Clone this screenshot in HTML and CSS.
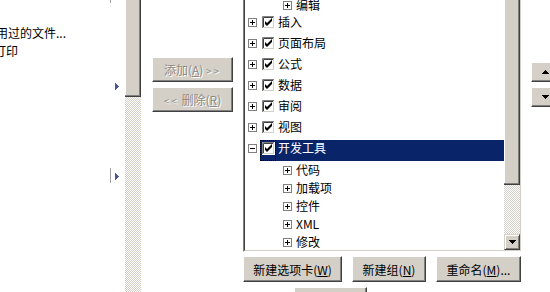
FILE: index.html
```html
<!DOCTYPE html>
<html lang="zh-CN">
<head>
  <meta charset="UTF-8">
  <title>自定义功能区</title>
  <link rel="stylesheet" href="styles.css">
</head>
<body>

  <svg class="defs" width="0" height="0">
    <symbol id="plus" viewBox="0 0 9 9">
      <rect x="0.5" y="0.5" width="8" height="8" fill="#fff" stroke="#808080"/>
      <path d="M2 4.5h5M4.5 2v5" stroke="#000"/>
    </symbol>
    <symbol id="minus" viewBox="0 0 9 9">
      <rect x="0.5" y="0.5" width="8" height="8" fill="#fff" stroke="#808080"/>
      <path d="M2 4.5h5" stroke="#000"/>
    </symbol>
    <symbol id="check" viewBox="0 0 13 13">
      <rect width="13" height="13" fill="#fff"/>
      <path d="M0.5 12.5V0.5H12.5" fill="none" stroke="#808080"/>
      <path d="M1.5 11.5V1.5H11.5" fill="none" stroke="#404040"/>
      <path d="M0 12.5h13M12.5 0v13" stroke="#fff"/>
      <path d="M1 11.5h11M11.5 1v11" stroke="#d4d0c8"/>
      <path d="M3 5l2 2 5-5v3l-5 5-2-2z" fill="#000"/>
    </symbol>
    <symbol id="arrow-down" viewBox="0 0 7 4">
      <path d="M0 0h7v1h-1v1h-1v1h-1v1h-1v-1h-1v-1h-1v-1h-1z" fill="#000"/>
    </symbol>
    <symbol id="arrow-up" viewBox="0 0 7 4">
      <path d="M0 4h7v-1h-1v-1h-1v-1h-1v-1h-1v1h-1v1h-1v1h-1z" fill="#000"/>
    </symbol>
  </svg>

  <div class="dialog">

    <!-- 命令列表 -->
    <div class="cmd-pane">
      <ul class="cmd-list">
        <li class="cmd-row"><span></span><i class="split"></i></li>
        <li class="cmd-row"></li>
        <li class="cmd-row"><span class="cmd-label cut-a">用过的文件...</span></li>
        <li class="cmd-row"><span class="cmd-label cut-b">打印</span></li>
        <li class="cmd-row"></li>
        <li class="cmd-row"><span></span><span></span><i class="more"><svg width="4" height="7" viewBox="0 0 4 7"><path d="M0 0v7h1v-1h1v-1h1v-1h1v-1h-1v-1h-1v-1h-1v-1z" fill="#4b5796"/></svg></i></li>
        <li class="cmd-row"></li>
        <li class="cmd-row"></li>
        <li class="cmd-row"></li>
        <li class="cmd-row"></li>
        <li class="cmd-row"><span></span><i class="split"></i><i class="more"><svg width="4" height="7" viewBox="0 0 4 7"><path d="M0 0v7h1v-1h1v-1h1v-1h1v-1h-1v-1h-1v-1h-1v-1z" fill="#4b5796"/></svg></i></li>
      </ul>
    </div>
    <div class="vscroll">
      <div class="thumb cmd-thumb"></div>
      <div class="track"></div>
    </div>

    <!-- 添加 / 删除 -->
    <div class="move-col">
      <button class="btn btn-move" disabled>添加(<u>A</u>) <span class="arrows">&gt;&gt;</span></button>
      <button class="btn btn-move" disabled><span class="arrows">&lt;&lt;</span> 删除(<u>R</u>)</button>
    </div>

    <!-- 主选项卡 -->
    <div class="tree-col">
      <div class="tree-box">
        <div class="tree-inner">
          <ul class="tree">
            <li class="node sub"><svg class="exp"><use href="#plus"/></svg><span class="node-label">编辑</span></li>
            <li class="node top"><svg class="exp"><use href="#plus"/></svg><span class="chk-wrap"><svg class="chk"><use href="#check"/></svg></span><span class="node-label">插入</span></li>
            <li class="node top"><svg class="exp"><use href="#plus"/></svg><span class="chk-wrap"><svg class="chk"><use href="#check"/></svg></span><span class="node-label">页面布局</span></li>
            <li class="node top"><svg class="exp"><use href="#plus"/></svg><span class="chk-wrap"><svg class="chk"><use href="#check"/></svg></span><span class="node-label">公式</span></li>
            <li class="node top"><svg class="exp"><use href="#plus"/></svg><span class="chk-wrap"><svg class="chk"><use href="#check"/></svg></span><span class="node-label">数据</span></li>
            <li class="node top"><svg class="exp"><use href="#plus"/></svg><span class="chk-wrap"><svg class="chk"><use href="#check"/></svg></span><span class="node-label">审阅</span></li>
            <li class="node top"><svg class="exp"><use href="#plus"/></svg><span class="chk-wrap"><svg class="chk"><use href="#check"/></svg></span><span class="node-label">视图</span></li>
            <li class="node top selected"><svg class="exp"><use href="#minus"/></svg><span class="chk-wrap"><svg class="chk"><use href="#check"/></svg></span><span class="node-label">开发工具</span></li>
            <li class="node sub"><svg class="exp"><use href="#plus"/></svg><span class="node-label">代码</span></li>
            <li class="node sub"><svg class="exp"><use href="#plus"/></svg><span class="node-label">加载项</span></li>
            <li class="node sub"><svg class="exp"><use href="#plus"/></svg><span class="node-label">控件</span></li>
            <li class="node sub"><svg class="exp"><use href="#plus"/></svg><span class="node-label">XML</span></li>
            <li class="node sub"><svg class="exp"><use href="#plus"/></svg><span class="node-label">修改</span></li>
          </ul>
          <div class="vscroll">
            <div class="thumb tree-thumb"></div>
            <div class="track"></div>
            <div class="sb-btn"><svg width="7" height="4"><use href="#arrow-down"/></svg></div>
          </div>
        </div>
      </div>

      <div class="tab-actions">
        <button class="btn btn-newtab">新建选项卡(<u>W</u>)</button>
        <button class="btn btn-newgroup">新建组(<u>N</u>)</button>
        <button class="btn btn-rename">重命名(<u>M</u>)...</button>
      </div>
      <div class="reset-row">
        <button class="btn btn-reset">重置(<u>E</u>) ▾</button>
      </div>
    </div>

    <!-- 上移 / 下移 -->
    <div class="order-col">
      <button class="btn btn-order"><svg width="7" height="4"><use href="#arrow-up"/></svg></button>
      <button class="btn btn-order"><svg width="7" height="4"><use href="#arrow-down"/></svg></button>
    </div>

  </div>

</body>
</html>
```

FILE: styles.css
```css
* {
  box-sizing: border-box;
}

body {
  margin: 0;
  width: 550px;
  height: 292px;
  overflow: hidden;
  background: #fff;
  color: #000;
  font-family: "Noto Sans CJK SC", "Liberation Sans", sans-serif;
  font-size: 12px;
}

.defs {
  display: block;
  width: 0;
  height: 0;
}

.dialog {
  display: flex;
  height: 292px;
}

/* left command list */
.cmd-pane {
  width: 125px;
  flex: none;
  overflow: hidden;
}

.cmd-list {
  list-style: none;
  margin: -12px 0 0;
  padding: 0;
}

.cmd-row {
  height: 18px;
  display: grid;
  grid-template-columns: 110px 5px 10px;
}

.cmd-label {
  line-height: 18px;
  white-space: nowrap;
  overflow: hidden;
}

.cut-a {
  text-indent: -4px;
}

.cut-b {
  text-indent: -6px;
}

.split {
  width: 1px;
  height: 15px;
  background: #a0a0a0;
}

.more {
  display: flex;
  padding-top: 5px;
}

/* scrollbars */
.vscroll {
  width: 16px;
  flex: none;
  display: flex;
  flex-direction: column;
}

.thumb {
  flex: none;
  background: #d4d0c8;
  border-right: 1px solid #404040;
  border-bottom: 1px solid #404040;
  box-shadow: inset -1px -1px #808080, inset 1px 0 #fff;
}

.cmd-thumb {
  height: 97px;
}

.tree-thumb {
  height: 191px;
}

.track {
  flex: 1;
  background: repeating-conic-gradient(#d4d0c8 0 25%, #fff 0 50%) 0 0 / 2px 2px;
}

.sb-btn {
  height: 16px;
  flex: none;
  display: flex;
  align-items: center;
  justify-content: center;
  background: #d4d0c8;
  border: 1px solid;
  border-color: #d4d0c8 #404040 #404040 #d4d0c8;
  box-shadow: inset 1px 1px #fff, inset -1px -1px #808080;
}

/* buttons */
.btn {
  font: inherit;
  color: #000;
  background: #d4d0c8;
  border: 1px solid;
  border-color: #fff #404040 #404040 #fff;
  box-shadow: inset -1px -1px #808080;
  padding: 0;
  white-space: nowrap;
}

.btn:disabled {
  color: #8c8a84;
  text-shadow: 1px 1px #fff;
}

.arrows {
  font-size: 10px;
  letter-spacing: 2px;
}

.move-col {
  width: 102px;
  flex: none;
  display: flex;
  flex-direction: column;
  gap: 5px;
  padding: 57px 0 0 11px;
}

.btn-move {
  width: 81px;
  height: 25px;
}

/* tab tree */
.tree-col {
  width: 279px;
  flex: none;
  display: flex;
  flex-direction: column;
}

.tree-box {
  margin-top: -8px;
  height: 260px;
  flex: none;
  border: 1px solid;
  border-color: #808080 #fff #fff #808080;
}

.tree-inner {
  height: 100%;
  display: flex;
  border: 1px solid;
  border-color: #404040 #d4d0c8 #d4d0c8 #404040;
}

.tree {
  flex: 1;
  list-style: none;
  margin: 0;
  padding: 2px 0 0;
  overflow: hidden;
}

.node {
  display: flex;
  align-items: flex-start;
}

.node.top {
  height: 21px;
  padding-left: 3px;
}

.node.sub {
  height: 18px;
  padding-left: 38px;
}

.exp {
  width: 9px;
  height: 9px;
  flex: none;
}

.top .exp {
  margin: 4px 3px 0 0;
}

.sub .exp {
  margin: 5px 4px 0 0;
}

.chk-wrap {
  width: 16px;
  height: 21px;
  flex: none;
  padding: 2px 0 0 2px;
}

.chk {
  display: block;
  width: 13px;
  height: 13px;
}

.node-label {
  flex: 1;
  white-space: nowrap;
}

.top .node-label {
  height: 21px;
  line-height: 16px;
  padding-left: 2px;
}

.sub .node-label {
  line-height: 18px;
}

.selected .chk-wrap {
  background: #0a246a;
  outline: 1px dotted #000;
  outline-offset: -1px;
}

.selected .node-label {
  background: #0a246a;
  color: #fff;
}

.tab-actions {
  display: flex;
  gap: 10px;
  margin-top: 4px;
}

.tab-actions .btn {
  height: 26px;
}

.btn-newtab {
  width: 99px;
}

.btn-newgroup {
  width: 74px;
}

.btn-rename {
  width: 85px;
}

.reset-row {
  margin: 5px 0 0 51px;
}

.btn-reset {
  width: 73px;
  height: 26px;
}

/* move up / down */
.order-col {
  flex: none;
  display: flex;
  flex-direction: column;
  gap: 5px;
  padding: 62px 0 0 9px;
}

.btn-order {
  width: 29px;
  height: 20px;
  display: flex;
  align-items: center;
  justify-content: center;
}
```
